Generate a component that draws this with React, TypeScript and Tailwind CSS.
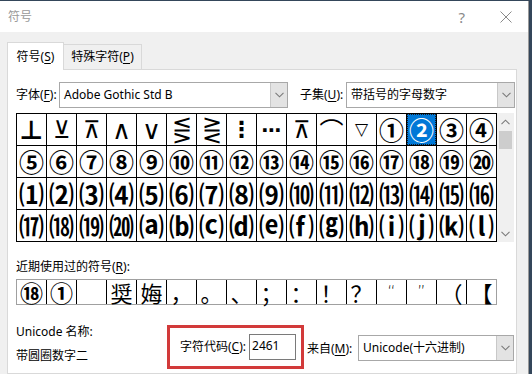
import React from 'react';

type Cell = { ch: string; cls: string };

const thin = "font-['DejaVu_Sans',sans-serif] font-extralight text-[24px]";
const wedge = "font-['DejaVu_Sans',sans-serif] font-extralight text-[26px]";
const circled = "font-['Noto_Sans_CJK_JP',sans-serif] font-bold text-[25px]";
const paren = "font-['Noto_Sans_CJK_JP',sans-serif] font-bold text-[25px]";

const row1: Cell[] = [
    { ch: '⊥', cls: "font-['DejaVu_Sans',sans-serif] font-bold text-[26px]" },
    { ch: '⊻', cls: thin },
    { ch: '⊼', cls: thin },
    { ch: '∧', cls: wedge },
    { ch: '∨', cls: wedge },
    { ch: '⋚', cls: thin },
    { ch: '⋛', cls: thin },
    { ch: '⋮', cls: "font-['DejaVu_Sans',sans-serif] font-bold text-[22px]" },
    { ch: '⋯', cls: "font-['DejaVu_Sans',sans-serif] font-bold text-[20px]" },
    { ch: '⊼', cls: thin },
    { ch: '⌒', cls: "font-['Noto_Sans_CJK_SC',sans-serif] text-[24px]" },
    { ch: '▽', cls: "font-['DejaVu_Sans',sans-serif] font-extralight text-[17px]" },
    { ch: '①', cls: circled },
    { ch: '②', cls: circled },
    { ch: '③', cls: circled },
    { ch: '④', cls: circled },
];

const row2: Cell[] = '⑤⑥⑦⑧⑨⑩⑪⑫⑬⑭⑮⑯⑰⑱⑲⑳'.split('').map((ch) => ({ ch, cls: circled }));
const row3: Cell[] = '⑴⑵⑶⑷⑸⑹⑺⑻⑼⑽⑾⑿⒀⒁⒂⒃'.split('').map((ch) => ({ ch, cls: paren }));
const row4: Cell[] = '⒄⒅⒆⒇⒜⒝⒞⒟⒠⒡⒢⒣⒤⒥⒦⒧'.split('').map((ch) => ({ ch, cls: paren }));

const cells = [...row1, ...row2, ...row3, ...row4];
const SELECTED = 13;

const recent = ['⑱', '①', ' ', '奨', '娒', '，', '。', '、', '；', '：', '！', '？', '“', '”', '（', '【'];

const recentClass = (i: number) => {
    if (i < 2) return "font-['Noto_Sans_CJK_JP',sans-serif] font-bold text-[23px] leading-none";
    if (i === 12 || i === 13) return "font-['DejaVu_Sans',sans-serif] font-extralight text-[16px] leading-none";
    return "font-['Noto_Sans_CJK_SC',sans-serif] text-[22px] leading-none";
};

const Chevron = ({ up = false }: { up?: boolean }) => (
    <svg width="9" height="6" viewBox="0 0 9 6" className={up ? 'rotate-180' : ''}>
        <polyline points="0.5,0.8 4.5,4.8 8.5,0.8" fill="none" stroke="#7a7a7a" strokeWidth="1.1" />
    </svg>
);

const Combo = ({ text, width }: { text: string; width: string }) => (
    <div className={`flex h-[26px] items-stretch border border-[#a8a8a8] bg-white ${width}`}>
        <span className="flex flex-1 items-center pl-[4px] text-[12px]">{text}</span>
        <span className="flex w-[17px] items-center justify-center border-l border-[#c8c8c8] bg-[#e3e3e3]">
            <Chevron />
        </span>
    </div>
);

const U = ({ k }: { k: string }) => <span className="underline underline-offset-2">{k}</span>;

export default function App() {
    return (
        <div className="h-[374px] w-[532px] overflow-hidden bg-[#34465a] pt-px font-['Noto_Sans','Noto_Sans_CJK_SC',sans-serif] text-[12px] leading-4 text-black">
            <div className="flex h-[373px] w-[529px] flex-col border-r border-[#9a9a9a] bg-[#f0f0f0]">
                {/* title bar */}
                <div className="flex h-[31px] shrink-0 items-center bg-white pl-[8px]">
                    <span className="text-[12px] text-[#9a9a9a]">符号</span>
                    <span className="ml-auto text-[15px] text-[#8a8a8a]">?</span>
                    <svg width="12" height="12" viewBox="0 0 12 12" className="ml-[35px] mr-[16px]">
                        <path d="M0.5 0.5 L11.5 11.5 M11.5 0.5 L0.5 11.5" stroke="#8a8a8a" strokeWidth="1" />
                    </svg>
                </div>

                <div className="flex flex-1 flex-col pl-[7px] pt-[10px]">
                    {/* tabs */}
                    <div className="flex h-[27px] items-end">
                        <div className="relative z-10 -mb-px flex h-[28px] w-[57px] items-center justify-center border-x border-t border-[#d9d9d9] bg-white">
                            符号(<U k="S" />)
                        </div>
                        <div className="flex h-[25px] w-[78px] items-center justify-center border-r border-t border-[#d9d9d9] bg-[#f0f0f0]">
                            特殊字符(<U k="P" />)
                        </div>
                    </div>

                    {/* panel */}
                    <div className="flex w-[510px] flex-1 flex-col border border-[#d9d9d9] bg-white pl-[8px]">
                        <div className="mt-[12px] flex items-center">
                            <span className="w-[43px]">字体(<U k="F" />):</span>
                            <Combo text="Adobe Gothic Std B" width="w-[229px]" />
                            <span className="ml-[12px] w-[46px]">子集(<U k="U" />):</span>
                            <Combo text="带括号的字母数字" width="w-[169px]" />
                        </div>

                        {/* symbol grid */}
                        <div className="mt-[5px] flex">
                            <div className="grid grid-cols-[repeat(16,29px)] grid-rows-[repeat(4,31px)] gap-px bg-black p-px">
                                {cells.map((c, i) => (
                                    <div
                                        key={i}
                                        className={
                                            i === SELECTED
                                                ? 'flex items-center justify-center border border-dotted border-[#1a1a1a] bg-[#0078d7] text-white'
                                                : 'flex items-center justify-center bg-white'
                                        }
                                    >
                                        <span className={`leading-none ${c.cls}`}>{c.ch}</span>
                                    </div>
                                ))}
                            </div>
                            <div className="flex h-[129px] w-[17px] flex-col items-center bg-[#f0f0f0]">
                                <div className="flex h-[17px] items-center justify-center">
                                    <Chevron up />
                                </div>
                                <div className="mt-[1px] h-[18px] w-[13px] bg-[#cdcdcd]" />
                                <div className="mt-auto flex h-[17px] items-center justify-center">
                                    <Chevron />
                                </div>
                            </div>
                        </div>

                        <div className="mt-[17px]">近期使用过的符号(<U k="R" />):</div>

                        <div className="mt-[4px] flex w-[481px] border border-[#a0a0a0]">
                            {recent.map((ch, i) => (
                                <div
                                    key={i}
                                    className={`flex h-[24px] w-[29px] items-center justify-center bg-white ${i > 0 ? 'ml-px shadow-[-1px_0_0_#000]' : ''}`}
                                >
                                    <span className={recentClass(i)}>{ch}</span>
                                </div>
                            ))}
                        </div>

                        {/* bottom */}
                        <div className="mt-[19px] flex items-start">
                            <div className="flex w-[151px] flex-col">
                                <span>Unicode 名称:</span>
                                <span className="mt-[8px]">带圆圈数字二</span>
                            </div>
                            <div className="mt-px flex h-[44px] w-[137px] items-center border-[3px] border-[#d23a3a] pl-[10px]">
                                <span>字符代码(<U k="C" />):</span>
                                <div className="ml-[3px] flex h-[26px] w-[47px] items-start border border-[#7a7a7a] bg-white pl-[2px] pt-[3px]">
                                    2461
                                </div>
                            </div>
                            <span className="ml-[3px] mt-[17px] w-[51px]">来自(<U k="M" />):</span>
                            <div className="mt-[11px]">
                                <Combo text="Unicode(十六进制)" width="w-[156px]" />
                            </div>
                        </div>
                    </div>
                </div>
            </div>
        </div>
    );
}
